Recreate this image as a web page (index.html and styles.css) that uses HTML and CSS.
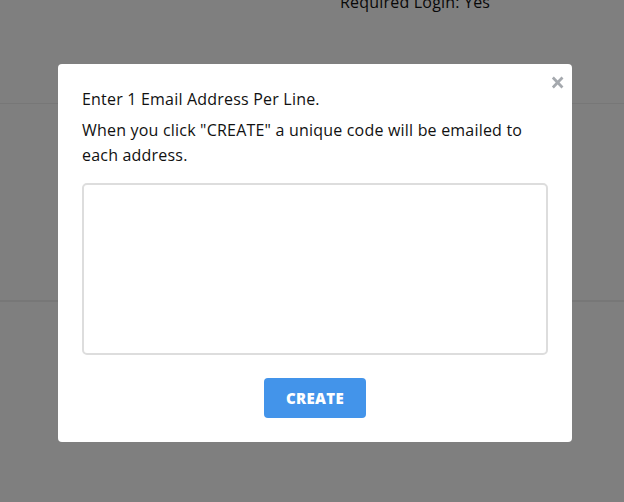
FILE: index.html
```html
<!DOCTYPE html>
<html lang="en">
<head>
    <meta charset="UTF-8">
    <meta name="viewport" content="width=device-width, initial-scale=1.0">
    <title>Invite Codes</title>
    <link rel="stylesheet" href="styles.css">
</head>
<body>
    <div class="page">
        <div class="row row-first">
            <p class="detail">Required Login: Yes</p>
        </div>
        <div class="row row-mid"></div>
        <div class="row"></div>
    </div>

    <!-- Invite popup -->
    <div class="overlay">
        <div class="modal">
            <div class="close-modal">&times;</div>
            <p class="intro">Enter 1 Email Address Per Line.</p>
            <p class="intro">When you click "CREATE" a unique code will be emailed to each address.</p>
            <textarea class="emails"></textarea>
            <div class="actions">
                <button class="button">CREATE</button>
            </div>
        </div>
    </div>
</body>
</html>
```

FILE: styles.css
```css
body {
    font-family: "Open Sans", Arial, sans-serif;
    background-color: white;
    color: #111;
    margin: 0;
    padding: 0;
}
.page {
    overflow: hidden;
    height: 502px;
}
.row {
    border-bottom: 1px solid #eee;
}
.row-first {
    display: flow-root;
    height: 103px;
}
.row-mid {
    height: 196px;
}
.detail {
    margin: -9px 0 0 340px;
    font-size: 16px;
    letter-spacing: 0.2px;
}
.overlay {
    position: fixed;
    left: 0;
    top: 0;
    width: 100%;
    height: 100%;
    background-color: rgba(0, 0, 0, 0.5);
    display: flex;
    justify-content: center;
    align-items: center;
}
.modal {
    position: relative;
    box-sizing: border-box;
    width: 514px;
    margin: 4px 0 0 6px;
    background-color: white;
    border-radius: 4px;
    padding: 23px 24px 24px;
}
.close-modal {
    position: absolute;
    top: 0;
    right: 7px;
    font-size: 26px;
    font-weight: bold;
    color: #a5a9ae;
    cursor: pointer;
}
.intro {
    margin: 0 0 6px;
    font-size: 16px;
    letter-spacing: 0.2px;
    line-height: 25px;
}
.emails {
    display: block;
    box-sizing: border-box;
    width: 100%;
    height: 172px;
    margin-top: 15px;
    border: 2px solid #ddd;
    border-radius: 5px;
    resize: none;
}
.actions {
    display: flex;
    justify-content: center;
    margin-top: 23px;
}
.button {
    background-color: #4394ea;
    color: white;
    font-family: inherit;
    font-size: 15px;
    font-weight: 800;
    letter-spacing: 0.3px;
    width: 102px;
    height: 40px;
    border: none;
    border-radius: 4px;
    cursor: pointer;
}
```
